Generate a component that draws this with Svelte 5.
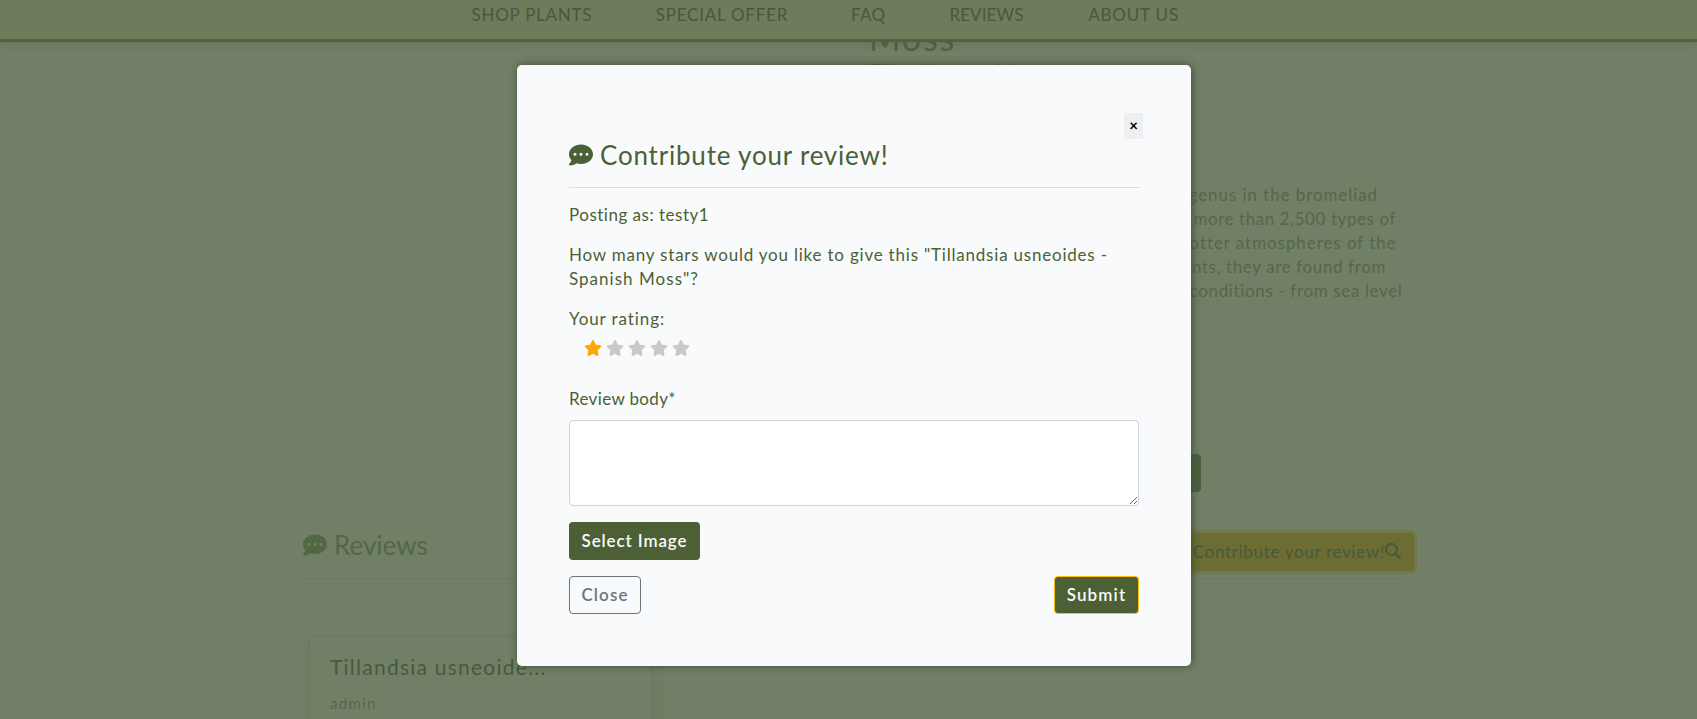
<script>
  const nav = [
    { label: 'SHOP PLANTS', width: 120, track: 0.745 },
    { label: 'SPECIAL OFFER', width: 131, track: 0.75 },
    { label: 'FAQ', width: 34, track: 0.281 },
    { label: 'REVIEWS', width: 74.5, track: 0.117 },
    { label: 'ABOUT US', width: 90, track: 0.824 }
  ];
  const description = [
    { text: 'genus in the bromeliad', end: 507, track: 0.919 },
    { text: 'more than 2,500 types of', end: 525, track: 0.574 },
    { text: 'hotter atmospheres of the', end: 525.5, track: 0.928 },
    { text: 'plants, they are found from', end: 515, track: 0.619 },
    { text: 'conditions - from sea level', end: 531.5, track: 0.638 }
  ];
  let rating = $state(1);
  let body = $state('');
</script>

{#snippet comment()}
  <svg class="comment" viewBox="0 0 512 512" aria-hidden="true">
    <path fill="currentColor" fill-rule="evenodd" d="M256 32C114.600 32 0 125.100 0 240c0 47.600 19.900 91.200 52.900 126.300C38 405.700 7 439.100 6.500 439.500c-6.600 7-8.400 17.200-4.600 26S14.400 480 24 480c61.500 0 110-25.700 139.100-46.300C192 442.800 223.200 448 256 448c141.400 0 256-93.100 256-208S397.400 32 256 32zM128 272a32 32 0 1 1 0-64 32 32 0 0 1 0 64zm128 0a32 32 0 1 1 0-64 32 32 0 0 1 0 64zm128 0a32 32 0 1 1 0-64 32 32 0 0 1 0 64z" />
  </svg>
{/snippet}

<div class="page">
  <nav>
    {#each nav as item}
      <a href="#top" style="width: {item.width}px; letter-spacing: {item.track}px">{item.label}</a>
    {/each}
  </nav>

  <main>
    <section class="product">
      <h1>Moss</h1>
      <p class="latin">Tillandsia usneoides</p>
      <div class="description">
        {#each description as line}
          <p style="width: {line.end}px; letter-spacing: {line.track}px">{line.text}</p>
        {/each}
      </div>
      <span class="cart"></span>
    </section>

    <section class="reviews">
      <header>
        <h2>{@render comment()}<span>Reviews</span></h2>
        <button class="contribute">
          <span>Contribute your review!</span>
          <svg viewBox="0 0 512 512" aria-hidden="true"><path fill="currentColor" d="M416 208c0 45.900-14.900 88.300-40 122.700L502.600 457.400c12.500 12.500 12.500 32.800 0 45.300s-32.800 12.500-45.300 0L330.700 376c-34.400 25.200-76.800 40-122.700 40C93.100 416 0 322.900 0 208S93.100 0 208 0S416 93.100 416 208zM208 352a144 144 0 1 0 0-288 144 144 0 1 0 0 288z" /></svg>
        </button>
      </header>
      <article>
        <h3>Tillandsia usneoide...</h3>
        <p>admin</p>
      </article>
    </section>
  </main>

  <div class="overlay">
    <form class="modal">
      <button type="button" class="x">×</button>
      <div class="content">
        <h2>{@render comment()}<span>Contribute your review!</span></h2>
        <p class="posting">Posting as: testy1</p>
        <p class="question">How many stars would you like to give this "Tillandsia usneoides - <span>Spanish Moss"?</span></p>
        <p class="label">Your rating:</p>
        <div class="stars">
          {#each [1, 2, 3, 4, 5] as n}
            <button type="button" class:on={n <= rating} onclick={() => (rating = n)} aria-label="{n} stars">
              <svg viewBox="0 0 576 512"><path fill="currentColor" d="M316.900 18C311.600 7 300.400 0 288.100 0s-23.400 7-28.800 18L195 150.300 51.400 171.500c-12 1.800-22 10.200-25.700 21.700s-.7 24.200 7.900 32.700L137.800 329 113.200 474.700c-2 12 3 24.200 12.900 31.300s23 8 33.800 2.300l128.300-68.500 128.300 68.500c10.800 5.700 23.900 4.900 33.800-2.300s14.900-19.300 12.900-31.300L438.500 329 542.700 225.900c8.600-8.500 11.700-21.200 7.900-32.700s-13.700-19.900-25.700-21.700L381.200 150.300 316.900 18z" /></svg>
            </button>
          {/each}
        </div>
        <label for="body">Review body*</label>
        <textarea id="body" bind:value={body}></textarea>
        <button type="button" class="btn select">Select Image</button>
        <div class="actions">
          <button type="button" class="btn close">Close</button>
          <button type="button" class="btn submit">Submit</button>
        </div>
      </div>
    </form>
  </div>
</div>

<style>
  :global(body) { background: #727f67; }
  .page {
    position: relative;
    height: 719px;
    overflow: hidden;
    background: #727f67;
    color: #556744;
    font: 17px/24px Lato, sans-serif;
  }
  h1, h2, h3, p { margin: 0; font-weight: 400; white-space: nowrap; }
  button { font: inherit; padding: 0; border: 0; background: none; box-sizing: border-box; }
  .comment { width: 24px; height: 24px; flex: none; }

  nav {
    position: relative;
    box-sizing: border-box;
    height: 42px;
    display: flex;
    gap: 64.300px;
    padding: 3px 0 0 471.500px;
    background: #6e7c5b;
    border-bottom: 3px solid #4f6340;
    box-shadow: 0 2px 8px rgba(60, 80, 48, 0.25);
  }
  nav a { color: #455a3c; text-decoration: none; white-space: nowrap; }

  main { padding: 0 292px 0 303px; }
  .product { display: flow-root; height: 471px; padding-left: 568px; overflow: hidden; }
  h1 {
    height: 40px;
    margin: -23px 0 0 -2px;
    font-size: 34px;
    line-height: 38px;
    letter-spacing: 1.800px;
    color: #4f6340;
  }
  .latin { margin-top: -1px; font-size: 18px; color: #4f6340; }
  .description { margin-top: 101px; }
  .description p { text-align: right; }
  .cart { display: block; margin-top: 151px; width: 330px; height: 38px; border-radius: 4px; background: #4a5f3f; }

  .reviews header {
    display: flex;
    justify-content: space-between;
    width: 1102px;
    height: 65px;
    border-bottom: 1px solid #6b7960;
  }
  .reviews h2 { display: flex; gap: 7px; padding-top: 17px; font-size: 26px; line-height: 30px; color: #526744; }
  .reviews .comment { margin-top: 3px; }
  .contribute {
    display: flex;
    align-items: center;
    justify-content: flex-end;
    flex: none;
    width: 260px;
    height: 38px;
    margin: 20px -9px 0 0;
    padding-right: 13px;
    border-radius: 4px;
    background: #6d6d33;
    box-shadow: 0 0 0 3px #71764c;
    color: #455a3c;
    letter-spacing: 0.680px;
    white-space: nowrap;
  }
  .contribute svg { width: 16px; height: 16px; flex: none; margin-top: -2px; }
  article {
    box-sizing: border-box;
    width: 343px;
    height: 300px;
    margin: 56px 0 0 6px;
    padding: 19px 20px;
    border: 1px solid #6b7860;
    border-radius: 4px;
    box-shadow: 0 8px 16px rgba(60, 80, 48, 0.15);
  }
  h3 { font-size: 21px; line-height: 24px; letter-spacing: 1.240px; color: #465a3c; }
  article p { margin-top: 12px; font-size: 15px; letter-spacing: 1.3px; }

  .overlay { position: absolute; inset: 0; padding: 65px 0 0 517px; }
  .modal {
    box-sizing: border-box;
    width: 674px;
    height: 601px;
    padding: 48px;
    border-radius: 5px;
    background: #f8fafc;
    box-shadow: 1px 0 8px #3c4e30;
    color: #4c6035;
  }
  .x {
    display: block;
    width: 19px;
    height: 26px;
    margin-left: auto;
    background: #efefef;
    color: #000;
    font-size: 15px;
    font-weight: 700;
    line-height: 22px;
    padding-bottom: 2px;
  }
  .content { margin: 0 4px; display: flex; flex-direction: column; }
  .content h2 {
    display: flex;
    box-sizing: border-box;
    gap: 7px;
    height: 49px;
    padding-top: 1px;
    border-bottom: 1px solid #dbdee0;
    font-size: 26px;
    line-height: 30px;
    letter-spacing: 0.800px;
  }
  .content .comment { margin-top: 3px; }
  .posting { margin-top: 15px; letter-spacing: 0.500px; }
  .question { margin-top: 16px; letter-spacing: 0.790px; }
  .question span { display: block; letter-spacing: 1.030px; }
  .label { margin-top: 16px; letter-spacing: 0.910px; }
  .stars { display: flex; gap: 4px; height: 16px; margin: 9px 0 31px 15px; }
  .stars button { display: block; width: 18px; height: 16px; color: #c8c9ca; }
  .stars .on { color: #fea70b; }
  .stars svg { display: block; width: 18px; height: 16px; }
  label { letter-spacing: 0.350px; }
  textarea {
    box-sizing: border-box;
    height: 86px;
    margin: 9px 0 16px;
    padding: 6px 12px;
    border: 1px solid #ced4da;
    border-radius: 4px;
    background: #fff;
    font: inherit;
    resize: vertical;
  }
  .btn { height: 38px; padding-bottom: 1px; border-radius: 4px; font-weight: 600; white-space: nowrap; }
  .select { width: 131px; background: #4c5f35; color: #f8fafc; letter-spacing: 0.880px; }
  .actions { display: flex; justify-content: space-between; margin-top: 16px; }
  .close { width: 72px; border: 1px solid #6c757d; color: #6c757d; letter-spacing: 1.100px; }
  .submit { width: 85px; border: 1px solid #ffc107; background: #4c5f35; color: #f8fafc; letter-spacing: 1.140px; }
</style>
